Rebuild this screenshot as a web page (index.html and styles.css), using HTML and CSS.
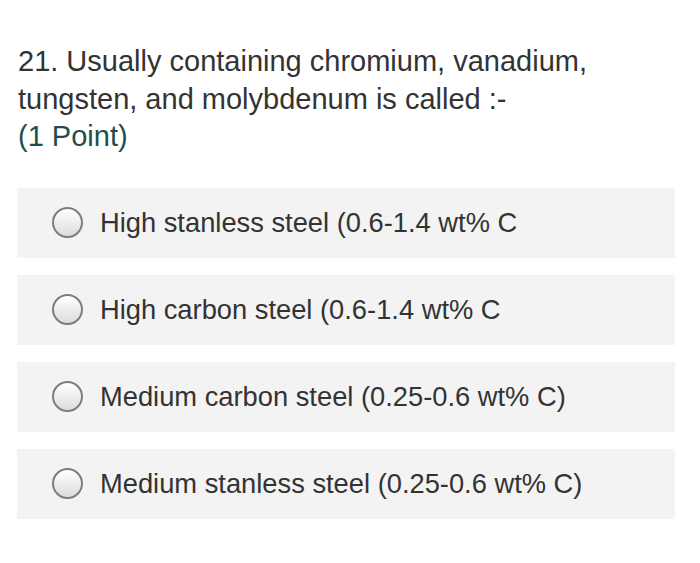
FILE: index.html
```html
<!DOCTYPE html>
<html>
<head>
<meta charset="utf-8">
<link rel="stylesheet" href="styles.css">
</head>
<body>
<div class="page">
  <div class="question">
    <div class="title">21. Usually containing chromium, vanadium, tungsten, and molybdenum is called :-</div>
    <div class="points">(1 Point)</div>
  </div>
  <div class="options">
    <div class="option"><span class="radio"></span><span class="label">High stanless steel (0.6-1.4 wt% C</span></div>
    <div class="option"><span class="radio"></span><span class="label">High carbon steel (0.6-1.4 wt% C</span></div>
    <div class="option"><span class="radio"></span><span class="label">Medium carbon steel (0.25-0.6 wt% C)</span></div>
    <div class="option"><span class="radio"></span><span class="label">Medium stanless steel (0.25-0.6 wt% C)</span></div>
  </div>
</div>
</body>
</html>
```
FILE: styles.css
```css
html, body {
  margin: 0;
  padding: 0;
  background: #ffffff;
}
body {
  font-family: "Liberation Sans", Arial, sans-serif;
  color: #333333;
}
.page {
  padding: 43px 25px 0 17px;
}
.question {
  padding-left: 1px;
  width: 620px;
}
.title {
  font-size: 29px;
  line-height: 37.5px;
}
.points {
  font-size: 29px;
  line-height: 37.5px;
  color: #1e4f4b;
}
.options {
  margin-top: 32px;
  display: flex;
  flex-direction: column;
  gap: 17px;
}
.option {
  background: #f3f3f3;
  height: 70px;
  display: flex;
  align-items: center;
  padding-left: 35px;
}
.radio {
  width: 27px;
  height: 27px;
  border: 2px solid #7d7d7d;
  border-radius: 50%;
  background: linear-gradient(#ffffff, #dcdcdc);
  flex: none;
}
.label {
  margin-left: 17px;
  font-size: 27.3px;
}
```
